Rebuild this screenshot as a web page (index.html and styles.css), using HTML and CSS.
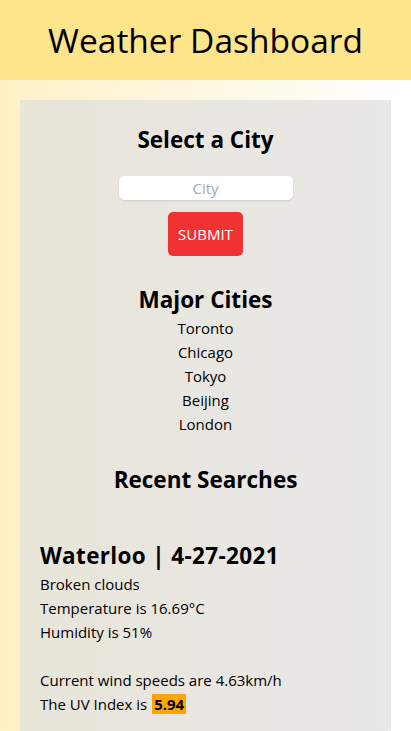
FILE: index.html
```html
<!DOCTYPE html>
<html lang="en">
<head>
<meta charset="utf-8">
<title>Weather Dashboard</title>
<link rel="stylesheet" href="styles.css">
</head>
<body>
<header class="top">
  <h1 class="title">Weather Dashboard</h1>
</header>
<main class="card">
  <section class="search">
    <h2 class="heading">Select a City</h2>
    <input class="city-input" type="text" placeholder="City">
    <button class="submit" type="button">SUBMIT</button>
  </section>
  <section class="major">
    <h2 class="heading">Major Cities</h2>
    <ul class="city-list">
      <li>Toronto</li>
      <li>Chicago</li>
      <li>Tokyo</li>
      <li>Beijing</li>
      <li>London</li>
    </ul>
  </section>
  <section class="recent">
    <h2 class="heading">Recent Searches</h2>
  </section>
  <section class="current">
    <h2 class="current-title">Waterloo | 4-27-2021</h2>
    <p class="line">Broken clouds</p>
    <p class="line">Temperature is 16.69°C</p>
    <p class="line">Humidity is 51%</p>
    <p class="line blank">&nbsp;</p>
    <p class="line">Current wind speeds are 4.63km/h</p>
    <p class="line">The UV Index is <span class="uv">5.94</span></p>
  </section>
</main>
</body>
</html>
```

FILE: styles.css
```css
* { box-sizing: border-box; }
html, body {
  margin: 0;
  padding: 0;
}
body {
  font-family: "Open Sans", "Noto Sans", sans-serif;
  font-size: 15px;
  color: #000;
  background: linear-gradient(to right, #fef1c6 0%, #ffffff 100%);
  min-height: 731px;
}
.top {
  height: 80px;
  background: #fee58b;
  display: flex;
  align-items: center;
  justify-content: center;
}
.title {
  margin: 0;
  font-weight: 400;
  font-size: 33.5px;
  line-height: 44px;
}
.card {
  margin: 20px 20px 0;
  background: linear-gradient(to right, #e8e5d9 0%, #e8e8e8 100%);
  padding: 24px 20px 20px;
  min-height: 631px;
}
.search, .major, .recent {
  display: flex;
  flex-direction: column;
  align-items: center;
}
.heading {
  margin: 0;
  font-size: 22.5px;
  font-weight: 700;
  line-height: 32px;
}
.city-input {
  margin-top: 20px;
  width: 174px;
  height: 24px;
  border: none;
  border-radius: 5px;
  background: #fff;
  box-shadow: 0 1px 2px rgba(0,0,0,0.12);
  text-align: center;
  font-family: inherit;
  font-size: 15px;
  padding: 0;
}
.city-input::placeholder { color: #a3a9b7; }
.submit {
  margin-top: 12px;
  width: 75px;
  height: 44px;
  border: none;
  border-radius: 5px;
  background: #ef3333;
  color: #fff;
  font-family: inherit;
  font-size: 15px;
  padding: 0;
}
.major { margin-top: 28px; }
.city-list {
  list-style: none;
  margin: 0;
  padding: 0;
  text-align: center;
  line-height: 24px;
}
.recent { margin-top: 28px; }
.current { margin-top: 44px; }
.current-title {
  margin: 0;
  font-size: 22.5px;
  font-weight: 700;
  line-height: 32px;
  letter-spacing: 0.35px;
}
.line {
  margin: 0;
  line-height: 24px;
}
.uv {
  background: #ffa500;
  font-weight: 700;
  padding: 0 2px;
  margin-left: 1px;
}
```
